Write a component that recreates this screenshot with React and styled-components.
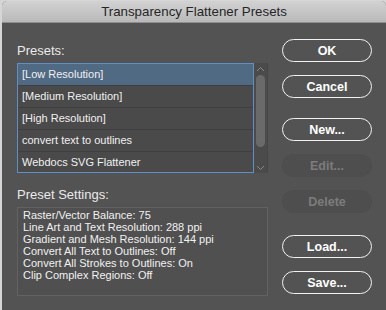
import React from "react";
import styled, { createGlobalStyle } from "styled-components";

const presets = [
  "[Low Resolution]",
  "[Medium Resolution]",
  "[High Resolution]",
  "convert text to outlines",
  "Webdocs SVG Flattener",
];

const settings = [
  "Raster/Vector Balance: 75",
  "Line Art and Text Resolution: 288 ppi",
  "Gradient and Mesh Resolution: 144 ppi",
  "Convert All Text to Outlines: Off",
  "Convert All Strokes to Outlines: On",
  "Clip Complex Regions: Off",
];

const App = () => {
  return (
    <>
      <GlobalStyle />
      <Dialog>
        <TitleBar>Transparency Flattener Presets</TitleBar>
        <Body>
          <LeftColumn>
            <Label>Presets:</Label>
            <ListWrap>
              <List>
                {presets.map((name, i) => (
                  <Row key={name} selected={i === 0}>
                    {name}
                  </Row>
                ))}
              </List>
              <ScrollBar>
                <Arrow>
                  <svg width="9" height="6" viewBox="0 0 9 6">
                    <path d="M1 5 L4.5 1.5 L8 5" fill="none" stroke="#8a8a8a" strokeWidth="1" />
                  </svg>
                </Arrow>
                <Thumb />
                <Arrow>
                  <svg width="9" height="6" viewBox="0 0 9 6">
                    <path d="M1 1 L4.5 4.5 L8 1" fill="none" stroke="#8a8a8a" strokeWidth="1" />
                  </svg>
                </Arrow>
              </ScrollBar>
            </ListWrap>
            <Label second>Preset Settings:</Label>
            <SettingsBox>
              {settings.map((line) => (
                <div key={line}>{line}</div>
              ))}
            </SettingsBox>
          </LeftColumn>
          <Buttons>
            <Button>OK</Button>
            <Button>Cancel</Button>
            <Button gap={20}>New...</Button>
            <Button disabled>Edit...</Button>
            <Button disabled>Delete</Button>
            <Button gap={22}>Load...</Button>
            <Button>Save...</Button>
          </Buttons>
        </Body>
      </Dialog>
    </>
  );
};

const GlobalStyle = createGlobalStyle`
  html, body {
    margin: 0;
    padding: 0;
    background: #d6d6d6;
    overflow: hidden;
  }
  body {
    font-family: "Liberation Sans", Arial, sans-serif;
  }
`;

const Dialog = styled.div`
  margin: 1px 0 0 2px;
  width: 384px;
  height: 309px;
  background: #535353;
  border-radius: 5px 5px 0 0;
  overflow: hidden;
  display: flex;
  flex-direction: column;
`;

const TitleBar = styled.div`
  height: 21px;
  flex-shrink: 0;
  background: linear-gradient(#d2d2d2, #b9b9b9);
  border-bottom: 1px solid #8e8e8e;
  display: flex;
  align-items: center;
  justify-content: center;
  color: #262626;
  font-size: 13.3px;
`;

const Body = styled.div`
  display: flex;
  padding: 0 0 0 15px;
`;

const LeftColumn = styled.div`
  width: 251px;
  display: flex;
  flex-direction: column;
  padding-top: 20px;
`;

const Label = styled.div`
  color: #eaeaea;
  font-size: 13px;
  line-height: 16px;
  height: 16px;
  margin-top: ${(p) => (p.second ? "14px" : "0")};
  margin-bottom: 4px;
`;

const ListWrap = styled.div`
  display: flex;
  height: 110px;
`;

const List = styled.div`
  width: 236px;
  border: 1px solid #5f8fc4;
  background: #4a4a4a;
  display: flex;
  flex-direction: column;
`;

const Row = styled.div`
  height: 21px;
  line-height: 21px;
  padding-left: 4px;
  font-size: 11px;
  color: #f0f0f0;
  background: ${(p) => (p.selected ? "#506a84" : "transparent")};
  border-bottom: 1px solid #3f3f3f;
  &:last-child {
    border-bottom: none;
  }
`;

const ScrollBar = styled.div`
  width: 13px;
  background: #4b4b4b;
  border-right: 1px solid #464646;
  display: flex;
  flex-direction: column;
  align-items: center;
  justify-content: space-between;
  padding: 3px 0 2px;
`;

const Arrow = styled.div`
  height: 6px;
  display: flex;
`;

const Thumb = styled.div`
  width: 9px;
  flex: 0 0 72px;
  margin-bottom: auto;
  margin-top: 3px;
  border-radius: 5px;
  background: #6a6a6a;
`;

const SettingsBox = styled.div`
  width: 238px;
  height: 80px;
  border: 1px solid #626262;
  background: #505050;
  padding: 1px 6px 6px 5px;
  color: #f0f0f0;
  font-size: 11px;
  line-height: 12px;
`;

const Buttons = styled.div`
  display: flex;
  flex-direction: column;
  padding-top: 16px;
  margin-left: 14px;
  gap: 13px;
`;

const Button = styled.div`
  width: 88px;
  height: 21px;
  margin-top: ${(p) => (p.gap ? `${p.gap - 13}px` : "0")};
  border: 1.5px solid ${(p) => (p.disabled ? "transparent" : "#f2f2f2")};
  border-radius: 12px;
  background: ${(p) => (p.disabled ? "#4e4e4e" : "transparent")};
  color: ${(p) => (p.disabled ? "#7c7c7c" : "#ffffff")};
  font-size: 12.5px;
  font-weight: 600;
  display: flex;
  align-items: center;
  justify-content: center;
`;

export default App;
